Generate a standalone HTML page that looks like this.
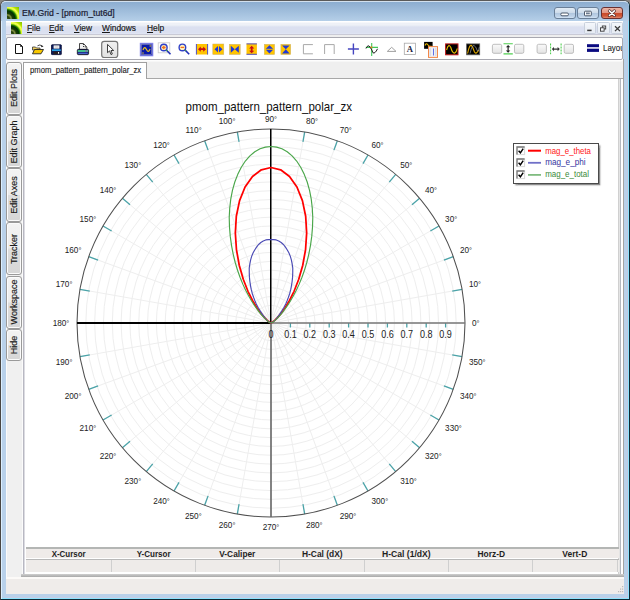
<!DOCTYPE html>
<html><head><meta charset="utf-8">
<style>
*{box-sizing:border-box;margin:0;padding:0}
html,body{width:630px;height:600px;overflow:hidden;background:#8a8682;font-family:"Liberation Sans",sans-serif}
.a{position:absolute}
#frame{left:0;top:0;width:630px;height:600px;background:#b9d1ea;border:1px solid #4a4642;border-top-color:#5a5a5a;border-right-color:#0c2a36;border-bottom-color:#0c2a36;border-radius:6px 6px 0 0;box-shadow:inset 1px 1px 0 #dcefff,inset -1px -1px 0 #8ee4ff}
#title{left:1px;top:1px;width:628px;height:20px;background:linear-gradient(#8cadd0,#b5cfe8);border-top:1px solid #d2e0ee;border-radius:5px 5px 0 0}
#ttext{left:21.5px;top:8.3px;-webkit-text-stroke:0.2px #1a1a30;font-size:9px;line-height:10px;color:#1a1a30;white-space:nowrap;transform:scaleX(0.966);transform-origin:0 0}
.cb{top:7.3px;height:11.6px;border:1px solid #6a7f98;border-radius:3px;background:linear-gradient(#e2ecf6 0%,#cddbea 48%,#b0c6de 52%,#c0d4ea 85%,#d4e4f4 100%)}
#cclose{border-color:#6a3030;background:linear-gradient(#ecb4a4 0%,#e29684 48%,#c84a2a 52%,#d05838 80%,#e08a70 100%)}
#menu{left:6px;top:21px;width:617px;height:14px;background:linear-gradient(#ffffff 0px,#ffffff 1px,#eef1f7 2px,#eef1f7 4px,#dbe0f0 6px,#dbe0f0 12px,#e2e7f5 13px);border-bottom:1px solid #c9cad6}
.mi{top:22.9px;-webkit-text-stroke:0.2px #1a1a1a;font-size:9.3px;line-height:10px;color:#1a1a1a;white-space:nowrap;transform:scaleX(0.9);transform-origin:0 0}
.mi u{text-decoration:underline}
.mdi{top:22.2px;width:12.4px;height:12.3px;border:1px solid #c8d0dc;background:linear-gradient(#f4f7fb,#e6ebf3);border-radius:1.5px}
#tbstrip{left:6px;top:35px;width:617px;height:3px;background:#eeeeee}
#toolbar{left:6px;top:37px;width:617px;height:23px;background:#fff;border:1px solid #a8a8b0;border-radius:2px;box-shadow:0 1.5px 0 #fdfdfd}
#client{left:6px;top:59px;width:618px;height:519px;background:#f0f0f0;border-right:1px solid #a4a4a4;border-left:1px solid #fcfbfa}
.vt{left:6px;width:15.6px;border:1px solid #9a9a9a;border-radius:3px;background:linear-gradient(#f3f3f3 0%,#ececec 49%,#dedede 51%,#d6d6d6 100%);box-shadow:inset 0 0 0 1px #fbfbfb}
.vt span{position:absolute;left:50%;top:50%;transform:translate(-50%,-50%) rotate(-90deg);font-size:9px;color:#1a1a1a;white-space:nowrap;-webkit-text-stroke:0.15px #1a1a1a}
#panel{left:23px;top:62px;width:600px;height:512.5px;background:#fff;border-left:1px solid #b8b8c2;box-shadow:inset 1px 0 0 #d4d4da,-1px 0 0 #fbfbfb}
#tabstrip{left:24px;top:62px;width:599px;height:17px;background:#efefef;border-bottom:1px solid #a8a8a8}
#tab{left:23px;top:62px;width:124px;height:17px;background:#fff;border:1px solid #a0a0a0;border-bottom:none;border-top-width:1px}
#tab span{position:absolute;left:5.5px;top:3.2px;-webkit-text-stroke:0.12px #1a1a1a;font-size:9px;line-height:9px;color:#1a1a1a;white-space:nowrap;transform:scaleX(0.855);transform-origin:0 0}
#plotarea{left:24px;top:79px;width:597px;height:495px;background:#fff;border-right:1px solid #b4b8c0;box-shadow:inset -1px 0 0 #e4e4e4,inset -2px 0 0 #d0d0d0,inset 1px 0 0 #dcdce2}
#tbl{left:26px;top:547px;width:593px;height:25px;border-top:2px solid #b4b4b4;background:#efebe8}
.th{top:549.9px;line-height:8px;width:84px;text-align:center;font-size:8.7px;font-weight:bold;color:#1e1e1e;transform:scaleX(0.895)}
#status{left:6px;top:577px;width:617px;height:16px;background:#f0edea}
</style></head><body>
<div id="frame" class="a"></div>
<div id="title" class="a"></div>

<div class="a" style="left:7px;top:7px;width:12px;height:12px;background:radial-gradient(circle at 0% 100%,#4a6020 0%,#203c08 14%,#8a9848 24%,#1c3c04 33%,#003200 48%,#2a8a00 56%,#d8f830 64%,#f4ff58 71%,#b8e400 80%,#78bc00 100%)"></div>
<div id="ttext" class="a">EM.Grid - [pmom_tut6d]</div>
<div class="a cb" style="left:553.5px;width:22px"></div>
<div class="a cb" style="left:577px;width:21.5px"></div>
<div id="cclose" class="a cb" style="left:601px;width:21.5px"></div>


<div id="menu" class="a"></div>
<div class="a" style="left:10.7px;top:22px;width:11.5px;height:11.5px;background:radial-gradient(circle at 0% 100%,#4a6020 0%,#203c08 14%,#8a9848 24%,#1c3c04 33%,#003200 48%,#2a8a00 56%,#d8f830 64%,#f4ff58 71%,#b8e400 80%,#78bc00 100%)"></div>
<div class="a mi" style="left:27px"><u>F</u>ile</div>
<div class="a mi" style="left:49px"><u>E</u>dit</div>
<div class="a mi" style="left:74px"><u>V</u>iew</div>
<div class="a mi" style="left:102px"><u>W</u>indows</div>
<div class="a mi" style="left:147px"><u>H</u>elp</div>
<div class="a mdi" style="left:583.7px"></div>
<div class="a mdi" style="left:597.2px"></div>
<div class="a mdi" style="left:611px"></div>
<svg class="a" style="left:0;top:0" width="630" height="40" viewBox="0 0 630 40">
<rect x="560.8" y="13" width="7.6" height="2.8" rx="1.2" fill="#fff" stroke="#3c4a5c" stroke-width="0.9"/>
<rect x="584.5" y="11.2" width="6.8" height="4.6" rx="0.8" fill="#fff" stroke="#3c4a5c" stroke-width="0.9"/>
<rect x="586" y="12.5" width="3.8" height="1.8" fill="#6a7a90"/>
<path d="M609.4 10.9 L614.4 15.5 M614.4 10.9 L609.4 15.5" stroke="#4a2a2a" stroke-width="3" stroke-linecap="round"/>
<path d="M609.4 10.9 L614.4 15.5 M614.4 10.9 L609.4 15.5" stroke="#fff" stroke-width="1.6" stroke-linecap="round"/>
<path d="M587.2 30.4 H591.6" stroke="#3a3a3a" stroke-width="1.5"/>
<rect x="602.3" y="26" width="3.4" height="3" fill="none" stroke="#3a3a3a" stroke-width="0.9"/>
<rect x="600.5" y="27.8" width="3.6" height="3.4" fill="#f4f6fa" stroke="#3a3a3a" stroke-width="0.9"/>
<path d="M615 26.3 L620 31.1 M620 26.3 L615 31.1" stroke="#3a3a3a" stroke-width="1.3"/>
</svg>

<div id="tbstrip" class="a"></div>
<div id="client" class="a"></div>
<div id="toolbar" class="a"></div>

<svg class="a" style="left:0;top:0" width="630" height="62" viewBox="0 0 630 62">
<!-- new doc -->
<path d="M15.5 44.5 H20.5 L22.5 46.5 V53.5 H15.5 Z" fill="#fff" stroke="#111" stroke-width="1"/>
<path d="M20.5 44.5 V46.5 H22.5" fill="none" stroke="#111" stroke-width="0.8"/>
<!-- open folder -->
<path d="M32.5 47 H35.5 L36.5 48 H40 V50 H32.5 Z" fill="#f0d060" stroke="#333" stroke-width="0.8"/>
<path d="M32.5 53.8 L34.5 49.5 H43.5 L41 53.8 Z" fill="#f8c800" stroke="#222" stroke-width="0.9"/>
<path d="M37.5 45.8 Q40 44 42 46" fill="none" stroke="#333" stroke-width="0.9"/>
<path d="M41.5 45 L43.5 46.5 L41.2 47.3 Z" fill="#111"/>
<!-- save floppy -->
<rect x="51.5" y="44.8" width="9.8" height="9.8" rx="0.5" fill="#0c1a5a" stroke="#050a30" stroke-width="0.8"/>
<rect x="53.6" y="45.4" width="5.8" height="3.2" fill="#f8f8f8"/>
<path d="M54.5 47 H58.5" stroke="#a0a0a0" stroke-width="0.6"/>
<rect x="52" y="49.3" width="8.8" height="1.7" fill="#2aa4e8"/>
<rect x="53.4" y="51.6" width="6.2" height="2.6" fill="#2a2020"/>
<rect x="58" y="52" width="1.1" height="1.7" fill="#fff"/>
<!-- printer -->
<path d="M79.5 43.5 H83.5 L86.8 47 V49.5 H79.5 Z" fill="#f0f0f0" stroke="#333" stroke-width="0.9"/>
<circle cx="83.5" cy="44.5" r="0.6" fill="#111"/><circle cx="83.6" cy="46.5" r="0.6" fill="#111"/><circle cx="85.3" cy="46.8" r="0.6" fill="#111"/>
<rect x="77.3" y="49.3" width="11.3" height="5.4" rx="1.2" fill="#0a1470" stroke="#111" stroke-width="0.7"/>
<rect x="77.8" y="50.1" width="10.3" height="1.8" fill="#48d090"/>
<rect x="85.5" y="50.1" width="1.6" height="1.8" fill="#8a6aa0"/>
<rect x="78.2" y="52.7" width="9.5" height="1.1" fill="#5a78e0"/>
<!-- pointer button -->
<rect x="101.7" y="41.3" width="16" height="16.2" rx="2.5" fill="url(#gbtn)" stroke="#767676" stroke-width="1.2"/>
<path d="M107.5 44.4 V52.7 L109.6 50.9 L111 54.6 L112.3 54 L111 50.5 H113.7 Z" fill="#fff" stroke="#2a2a2a" stroke-width="0.9" stroke-linejoin="round"/>
<defs>
<linearGradient id="gbtn" x1="0" y1="0" x2="0" y2="1"><stop offset="0" stop-color="#f0f0f0"/><stop offset="1" stop-color="#e2e2e2"/></linearGradient>
<linearGradient id="gsq" x1="0" y1="0" x2="0" y2="1"><stop offset="0" stop-color="#fafafa"/><stop offset="1" stop-color="#e4e4e4"/></linearGradient>
</defs>
<!-- blue wave box -->
<rect x="140.3" y="43.3" width="12.5" height="12.5" fill="#2030c0" stroke="#8080e8" stroke-width="1"/>
<rect x="141.5" y="44.5" width="10" height="10" fill="#0a1aa8" stroke="#9090b0" stroke-width="0.6"/>
<path d="M143 50 Q144.5 45.5 146.5 49.5 T150 49" fill="none" stroke="#e8c020" stroke-width="1.2"/>
<path d="M149.5 46 H151" stroke="#e8c020" stroke-width="1"/><path d="M142.2 53 H143.8" stroke="#e8c020" stroke-width="1"/>
<!-- zoom in -->
<rect x="158.2" y="42.8" width="11.6" height="10" fill="#fff" stroke="#c8c8c8" stroke-width="0.8"/>
<circle cx="163.8" cy="47.5" r="3.3" fill="#fff4c0" stroke="#3040c8" stroke-width="1.4"/>
<path d="M162 47.5 H165.6 M163.8 45.7 V49.3" stroke="#f07020" stroke-width="1.3"/>
<path d="M166.3 50 L170.5 54.3" stroke="#2030b8" stroke-width="1.6"/>
<path d="M166.3 50 L167.3 51" stroke="#40a040" stroke-width="1.2"/>
<!-- zoom out -->
<circle cx="182.4" cy="47.4" r="3.3" fill="#fff4c0" stroke="#3040c8" stroke-width="1.4"/>
<path d="M180.6 47.4 H184.2" stroke="#f07020" stroke-width="1.3"/>
<path d="M184.9 49.9 L189.2 54.2" stroke="#2030b8" stroke-width="1.6"/>
<path d="M184.9 49.9 L185.9 50.9" stroke="#40a040" stroke-width="1.2"/>
<!-- yellow boxes -->
<g fill="#ffc400">
<rect x="196" y="44" width="12" height="10.5"/>
<rect x="212.8" y="44" width="11" height="10.5"/>
<rect x="229.4" y="44.3" width="10.8" height="10.2"/>
<rect x="246.5" y="43.6" width="10.4" height="11"/>
<rect x="264.3" y="44.3" width="10.3" height="10.2"/>
<rect x="280.9" y="44.3" width="9.8" height="10.2"/>
</g>
<g stroke="#c8b070" stroke-width="0.5" fill="none">
<rect x="212.8" y="44" width="11" height="10.5"/><rect x="229.4" y="44.3" width="10.8" height="10.2"/><rect x="264.3" y="44.3" width="10.3" height="10.2"/><rect x="280.9" y="44.3" width="9.8" height="10.2"/>
</g>
<path d="M196.4 44 V54.5 M207.6 44 V54.5" stroke="#5050d0" stroke-width="1"/>
<path d="M198 49.2 L200.8 46.6 V48.3 H203.2 V46.6 L206 49.2 L203.2 51.8 V50.1 H200.8 V51.8 Z" fill="#c81010"/>
<path d="M218 46 V52.5 L214.5 49.2 Z M219 46 V52.5 L222.5 49.2 Z" fill="#2038d8"/>
<path d="M230.8 45.8 V52.8 L234.8 49.3 Z M238.8 45.8 V52.8 L234.8 49.3 Z" fill="#2038d8"/>
<path d="M246.5 43.9 H256.9 M246.5 54.3 H256.9" stroke="#5050d0" stroke-width="1"/>
<path d="M251.7 45.8 L254.3 48.5 H252.6 V50.7 H254.3 L251.7 53.2 L249.1 50.7 H250.8 V48.5 H249.1 Z" fill="#c81010"/>
<path d="M265.8 48.8 H273.1 L269.45 45.2 Z M265.8 49.8 H273.1 L269.45 53.4 Z" fill="#2038d8"/>
<path d="M282 45.4 H289.6 L285.8 49.3 Z M282 53.4 H289.6 L285.8 49.3 Z" fill="#2038d8"/>
<!-- [ and ∩ -->
<path d="M312.9 44.6 H303.4 V53.8 H312.9" fill="none" stroke="#a8a8a8" stroke-width="1"/>
<path d="M324.6 54 V44.6 H334.2 V54" fill="none" stroke="#a8a8a8" stroke-width="1"/>
<!-- + -->
<path d="M347.9 49 H358.9 M353.4 43.5 V54.5" stroke="#4545c0" stroke-width="1.4"/>
<!-- wave cursor -->
<path d="M371.7 42.9 V56.1 M365.8 47.4 H378" stroke="#40c858" stroke-width="1.1"/>
<path d="M366 48.5 Q368 44 370 47 T373 52.8 Q375 54 377.5 48.8" fill="none" stroke="#222" stroke-width="1"/>
<circle cx="371.4" cy="47.2" r="1" fill="#f08020"/>
<!-- triangle -->
<path d="M387.3 51.4 L391.7 47.3 L396 51.4 Z" fill="none" stroke="#a0a0a0" stroke-width="1"/>
<!-- A box -->
<rect x="404.3" y="43.2" width="11.2" height="11.2" fill="#fff" stroke="#a8a8a8" stroke-width="0.8"/>
<text x="409.9" y="52.4" text-anchor="middle" font-family="Liberation Serif" font-weight="bold" font-size="8.6" fill="#1a1a40">A</text>
<!-- complex icon -->
<rect x="424.1" y="41.9" width="8.5" height="6.9" fill="#000"/>
<path d="M425 45.5 Q426.3 42.5 427.8 44.8 T431.5 46" fill="none" stroke="#e8b800" stroke-width="1.1"/>
<rect x="428.5" y="46.6" width="9" height="10.8" fill="#f0f0f4" stroke="#f48848" stroke-width="1"/>
<path d="M430.2 48 V56 M435.8 48 V56" stroke="#d0d0d8" stroke-width="0.8"/>
<path d="M433.5 48.5 V55.5" stroke="#6070e8" stroke-width="1"/>
<!-- red box sine -->
<rect x="445.6" y="43.9" width="12.4" height="10.9" fill="#000" stroke="#c01818" stroke-width="1"/>
<path d="M446.6 50 Q448.5 42.8 450.8 47.5 Q452.6 53.8 454.8 53 Q456.6 52 457.2 48.5" fill="none" stroke="#e8c000" stroke-width="1.1"/>
<!-- gray box sine -->
<rect x="466.6" y="43.9" width="13.1" height="10.9" fill="#000" stroke="#606060" stroke-width="0.8"/>
<path d="M467.6 53.5 Q469.5 44 471.5 45.5 Q473 47 474.5 52 Q476 55 478.8 50" fill="none" stroke="#e0a800" stroke-width="1.1"/>
<path d="M470 53.5 Q472 45 474 45.5 Q476 46.5 477 50 Q478 53 479.4 47" fill="none" stroke="#808890" stroke-width="0.8"/>
<!-- squares -->
<g fill="url(#gsq)" stroke="#b8b8b8" stroke-width="0.9">
<rect x="492.4" y="44.3" width="9.3" height="9" rx="1.5"/>
<rect x="514.5" y="44.3" width="9.3" height="9" rx="1.5"/>
<rect x="537.1" y="44.3" width="9.3" height="9" rx="1.5"/>
<rect x="564.2" y="44.3" width="9.3" height="9" rx="1.5"/>
</g>
<!-- green ↕ -->
<path d="M503.5 43.8 H512.8 M503.5 53.9 H512.8" stroke="#50d050" stroke-width="1.1"/>
<path d="M508.1 45 L510.3 47.3 H508.7 V50.6 H510.3 L508.1 52.8 L505.9 50.6 H507.5 V47.3 H505.9 Z" fill="#222"/>
<!-- green ↔ -->
<path d="M550.6 43.5 V54.2 M561.1 43.5 V54.2" stroke="#40c840" stroke-width="1" stroke-dasharray="2 1"/>
<path d="M551.8 49.1 L554 46.9 V48.5 H557.6 V46.9 L559.8 49.1 L557.6 51.3 V49.7 H554 V51.3 Z" fill="#333"/>
<!-- layout -->
<rect x="587" y="44.2" width="12" height="3" fill="#0a0a80"/>
<rect x="587" y="48.7" width="12" height="3.2" fill="#0a0a80"/>
</svg>

<div class="a" style="left:602.5px;top:43px;width:19px;height:12px;overflow:hidden"><div style="font-size:9.2px;line-height:10px;color:#1a1a1a;white-space:nowrap;transform:scaleX(0.86);transform-origin:0 0;-webkit-text-stroke:0.1px #1a1a1a">Layout</div></div>
<div class="a vt" style="top:61.5px;height:53.3px"><span>Edit Plots</span></div>
<div class="a vt" style="top:114.8px;height:53.6px"><span>Edit Graph</span></div>
<div class="a vt" style="top:168.4px;height:53.4px"><span>Edit Axes</span></div>
<div class="a vt" style="top:221.8px;height:53.7px"><span>Tracker</span></div>
<div class="a vt" style="top:275.5px;height:53.5px"><span>Workspace</span></div>
<div class="a vt" style="top:329px;height:32.3px"><span>Hide</span></div>

<div id="panel" class="a"></div>
<div id="tabstrip" class="a"></div>
<div id="tab" class="a"><span>pmom_pattern_pattern_polar_zx</span></div>
<div id="plotarea" class="a"></div>
<svg class="a" style="left:0;top:0" width="630" height="600" viewBox="0 0 630 600">
<g fill="none" stroke="#eeeeee" stroke-width="1"><circle cx="271.0" cy="323.0" r="8.82"/><circle cx="271.0" cy="323.0" r="17.64"/><circle cx="271.0" cy="323.0" r="26.45"/><circle cx="271.0" cy="323.0" r="35.27"/><circle cx="271.0" cy="323.0" r="44.09"/><circle cx="271.0" cy="323.0" r="52.91"/><circle cx="271.0" cy="323.0" r="61.73"/><circle cx="271.0" cy="323.0" r="70.55"/><circle cx="271.0" cy="323.0" r="79.36"/><circle cx="271.0" cy="323.0" r="88.18"/><circle cx="271.0" cy="323.0" r="97.00"/><circle cx="271.0" cy="323.0" r="105.82"/><circle cx="271.0" cy="323.0" r="114.64"/><circle cx="271.0" cy="323.0" r="123.45"/><circle cx="271.0" cy="323.0" r="132.27"/><circle cx="271.0" cy="323.0" r="141.09"/><circle cx="271.0" cy="323.0" r="149.91"/><circle cx="271.0" cy="323.0" r="158.73"/><circle cx="271.0" cy="323.0" r="167.55"/><circle cx="271.0" cy="323.0" r="176.36"/><circle cx="271.0" cy="323.0" r="185.18"/><line x1="271.0" y1="323.0" x2="465.00" y2="323.00"/><line x1="271.0" y1="323.0" x2="462.05" y2="289.31"/><line x1="271.0" y1="323.0" x2="453.30" y2="256.65"/><line x1="271.0" y1="323.0" x2="439.01" y2="226.00"/><line x1="271.0" y1="323.0" x2="419.61" y2="198.30"/><line x1="271.0" y1="323.0" x2="395.70" y2="174.39"/><line x1="271.0" y1="323.0" x2="368.00" y2="154.99"/><line x1="271.0" y1="323.0" x2="337.35" y2="140.70"/><line x1="271.0" y1="323.0" x2="304.69" y2="131.95"/><line x1="271.0" y1="323.0" x2="271.00" y2="129.00"/><line x1="271.0" y1="323.0" x2="237.31" y2="131.95"/><line x1="271.0" y1="323.0" x2="204.65" y2="140.70"/><line x1="271.0" y1="323.0" x2="174.00" y2="154.99"/><line x1="271.0" y1="323.0" x2="146.30" y2="174.39"/><line x1="271.0" y1="323.0" x2="122.39" y2="198.30"/><line x1="271.0" y1="323.0" x2="102.99" y2="226.00"/><line x1="271.0" y1="323.0" x2="88.70" y2="256.65"/><line x1="271.0" y1="323.0" x2="79.95" y2="289.31"/><line x1="271.0" y1="323.0" x2="77.00" y2="323.00"/><line x1="271.0" y1="323.0" x2="79.95" y2="356.69"/><line x1="271.0" y1="323.0" x2="88.70" y2="389.35"/><line x1="271.0" y1="323.0" x2="102.99" y2="420.00"/><line x1="271.0" y1="323.0" x2="122.39" y2="447.70"/><line x1="271.0" y1="323.0" x2="146.30" y2="471.61"/><line x1="271.0" y1="323.0" x2="174.00" y2="491.01"/><line x1="271.0" y1="323.0" x2="204.65" y2="505.30"/><line x1="271.0" y1="323.0" x2="237.31" y2="514.05"/><line x1="271.0" y1="323.0" x2="271.00" y2="517.00"/><line x1="271.0" y1="323.0" x2="304.69" y2="514.05"/><line x1="271.0" y1="323.0" x2="337.35" y2="505.30"/><line x1="271.0" y1="323.0" x2="368.00" y2="491.01"/><line x1="271.0" y1="323.0" x2="395.70" y2="471.61"/><line x1="271.0" y1="323.0" x2="419.61" y2="447.70"/><line x1="271.0" y1="323.0" x2="439.01" y2="420.00"/><line x1="271.0" y1="323.0" x2="453.30" y2="389.35"/><line x1="271.0" y1="323.0" x2="462.05" y2="356.69"/></g>
<g stroke="#4aa3a8" stroke-width="1.3"><line x1="452.20" y1="291.05" x2="462.05" y2="289.31"/><line x1="443.90" y1="260.07" x2="453.30" y2="256.65"/><line x1="430.35" y1="231.00" x2="439.01" y2="226.00"/><line x1="411.95" y1="204.73" x2="419.61" y2="198.30"/><line x1="389.27" y1="182.05" x2="395.70" y2="174.39"/><line x1="363.00" y1="163.65" x2="368.00" y2="154.99"/><line x1="333.93" y1="150.10" x2="337.35" y2="140.70"/><line x1="302.95" y1="141.80" x2="304.69" y2="131.95"/><line x1="239.05" y1="141.80" x2="237.31" y2="131.95"/><line x1="208.07" y1="150.10" x2="204.65" y2="140.70"/><line x1="179.00" y1="163.65" x2="174.00" y2="154.99"/><line x1="152.73" y1="182.05" x2="146.30" y2="174.39"/><line x1="130.05" y1="204.73" x2="122.39" y2="198.30"/><line x1="111.65" y1="231.00" x2="102.99" y2="226.00"/><line x1="98.10" y1="260.07" x2="88.70" y2="256.65"/><line x1="89.80" y1="291.05" x2="79.95" y2="289.31"/><line x1="89.80" y1="354.95" x2="79.95" y2="356.69"/><line x1="98.10" y1="385.93" x2="88.70" y2="389.35"/><line x1="111.65" y1="415.00" x2="102.99" y2="420.00"/><line x1="130.05" y1="441.27" x2="122.39" y2="447.70"/><line x1="152.73" y1="463.95" x2="146.30" y2="471.61"/><line x1="179.00" y1="482.35" x2="174.00" y2="491.01"/><line x1="208.07" y1="495.90" x2="204.65" y2="505.30"/><line x1="239.05" y1="504.20" x2="237.31" y2="514.05"/><line x1="302.95" y1="504.20" x2="304.69" y2="514.05"/><line x1="333.93" y1="495.90" x2="337.35" y2="505.30"/><line x1="363.00" y1="482.35" x2="368.00" y2="491.01"/><line x1="389.27" y1="463.95" x2="395.70" y2="471.61"/><line x1="411.95" y1="441.27" x2="419.61" y2="447.70"/><line x1="430.35" y1="415.00" x2="439.01" y2="420.00"/><line x1="443.90" y1="385.93" x2="453.30" y2="389.35"/><line x1="452.20" y1="354.95" x2="462.05" y2="356.69"/><line x1="290.40" y1="323.0" x2="290.40" y2="327.5"/><line x1="309.80" y1="323.0" x2="309.80" y2="327.5"/><line x1="329.20" y1="323.0" x2="329.20" y2="327.5"/><line x1="348.60" y1="323.0" x2="348.60" y2="327.5"/><line x1="368.00" y1="323.0" x2="368.00" y2="327.5"/><line x1="387.40" y1="323.0" x2="387.40" y2="327.5"/><line x1="406.80" y1="323.0" x2="406.80" y2="327.5"/><line x1="426.20" y1="323.0" x2="426.20" y2="327.5"/><line x1="445.60" y1="323.0" x2="445.60" y2="327.5"/></g>
<circle cx="271.0" cy="323.0" r="194.0" fill="none" stroke="#505050" stroke-width="1.05"/>
<line x1="271.0" y1="323.0" x2="465.0" y2="323.0" stroke="#777" stroke-width="1.6"/>
<line x1="271.0" y1="323.0" x2="271.0" y2="517.0" stroke="#666" stroke-width="1.6"/>
<line x1="77.0" y1="322.9" x2="271.0" y2="322.9" stroke="#000" stroke-width="2"/>
<line x1="270.75" y1="129.0" x2="270.75" y2="323.0" stroke="#000" stroke-width="1.5"/>
<polyline points="271.00,323.00 271.00,323.00 271.00,323.00 271.00,323.00 271.02,323.00 271.07,322.98 271.22,322.91 271.55,322.74 272.18,322.35 273.27,321.56 274.98,320.11 277.42,317.69 280.65,313.94 284.64,308.48 289.21,300.99 294.05,291.28 298.74,279.29 302.75,265.24 305.56,249.56 306.66,232.94 305.68,216.28 302.42,200.61 296.94,187.01 289.51,176.47 280.64,169.80 271.00,167.51 261.36,169.80 252.49,176.47 245.06,187.01 239.58,200.61 236.32,216.28 235.34,232.94 236.44,249.56 239.25,265.24 243.26,279.29 247.95,291.28 252.79,300.99 257.36,308.48 261.35,313.94 264.58,317.69 267.02,320.11 268.73,321.56 269.82,322.35 270.45,322.74 270.78,322.91 270.93,322.98 270.98,323.00 271.00,323.00 271.00,323.00 271.00,323.00 271.00,323.00" fill="none" stroke="#ff0000" stroke-width="1.75" stroke-linejoin="round"/>
<polyline points="271.15,323.00 271.18,322.99 271.21,322.99 271.25,322.98 271.30,322.96 271.35,322.94 271.42,322.92 271.50,322.89 271.59,322.85 271.69,322.80 271.82,322.73 271.96,322.65 272.13,322.55 272.33,322.42 272.57,322.26 272.84,322.06 273.16,321.82 273.52,321.51 273.95,321.13 274.44,320.66 275.01,320.09 275.67,319.38 276.43,318.51 277.29,317.45 278.29,316.16 279.43,314.57 280.72,312.65 282.19,310.31 283.85,307.47 285.72,304.02 287.00,300.98 288.34,297.49 289.73,293.48 290.72,289.66 291.44,285.82 292.10,281.58 292.58,277.14 292.74,272.75 292.77,268.01 292.18,264.18 291.42,260.14 290.35,256.39 288.97,253.01 287.31,250.01 285.47,247.17 283.43,244.50 281.16,242.55 278.75,241.01 276.23,239.92 273.62,239.67 271.00,239.58 268.38,239.67 265.77,239.92 263.25,241.01 260.84,242.55 258.57,244.50 256.53,247.17 254.69,250.01 253.03,253.01 251.65,256.39 250.58,260.14 249.82,264.18 249.23,268.01 249.26,272.75 249.42,277.14 249.90,281.58 250.56,285.82 251.28,289.66 252.27,293.48 253.66,297.49 255.00,300.98 256.28,304.02 258.15,307.47 259.81,310.31 261.28,312.65 262.57,314.57 263.71,316.16 264.71,317.45 265.57,318.51 266.33,319.38 266.99,320.09 267.56,320.66 268.05,321.13 268.48,321.51 268.84,321.82 269.16,322.06 269.43,322.26 269.67,322.42 269.87,322.55 270.04,322.65 270.18,322.73 270.31,322.80 270.41,322.85 270.50,322.89 270.58,322.92 270.65,322.94 270.70,322.96 270.75,322.98 270.79,322.99 270.82,322.99 270.85,323.00" fill="none" stroke="#4a4ab4" stroke-width="1.15" stroke-linejoin="round"/>
<polyline points="271.15,323.00 271.18,322.99 271.21,322.99 271.25,322.98 271.30,322.96 271.35,322.94 271.42,322.92 271.50,322.89 271.59,322.85 271.69,322.80 271.82,322.73 271.97,322.65 272.15,322.54 272.38,322.40 272.66,322.22 273.01,321.97 273.46,321.65 274.02,321.21 274.72,320.64 275.59,319.88 276.65,318.90 277.91,317.64 279.40,316.05 281.13,314.07 283.09,311.64 285.30,308.70 287.75,305.17 290.41,300.98 293.28,296.06 296.33,290.34 299.06,284.38 301.79,277.69 304.47,270.26 306.78,262.49 308.76,254.31 310.46,245.56 311.74,236.42 312.50,227.10 312.78,217.48 312.29,208.32 311.24,199.14 309.55,190.32 307.20,182.01 304.23,174.34 300.70,167.30 296.66,161.01 292.12,155.84 287.19,151.71 281.96,148.72 276.53,147.10 271.00,146.55 265.47,147.10 260.04,148.72 254.81,151.71 249.88,155.84 245.34,161.01 241.30,167.30 237.77,174.34 234.80,182.01 232.45,190.32 230.76,199.14 229.71,208.32 229.22,217.48 229.50,227.10 230.26,236.42 231.54,245.56 233.24,254.31 235.22,262.49 237.53,270.26 240.21,277.69 242.94,284.38 245.67,290.34 248.72,296.06 251.59,300.98 254.25,305.17 256.70,308.70 258.91,311.64 260.87,314.07 262.60,316.05 264.09,317.64 265.35,318.90 266.41,319.88 267.28,320.64 267.98,321.21 268.54,321.65 268.99,321.97 269.34,322.22 269.62,322.40 269.85,322.54 270.03,322.65 270.18,322.73 270.31,322.80 270.41,322.85 270.50,322.89 270.58,322.92 270.65,322.94 270.70,322.96 270.75,322.98 270.79,322.99 270.82,322.99 270.85,323.00" fill="none" stroke="#4aa64a" stroke-width="1.15" stroke-linejoin="round"/>
<g font-family="Liberation Sans" font-size="8.2" fill="#222"><text x="472.0" y="326.0" text-anchor="start">0<tspan font-size="7.4">°</tspan></text><text x="468.9" y="287.1" text-anchor="start">10<tspan font-size="7.4">°</tspan></text><text x="459.9" y="253.3" text-anchor="start">20<tspan font-size="7.4">°</tspan></text><text x="445.1" y="221.5" text-anchor="start">30<tspan font-size="7.4">°</tspan></text><text x="425.0" y="192.8" text-anchor="start">40<tspan font-size="7.4">°</tspan></text><text x="400.2" y="168.0" text-anchor="start">50<tspan font-size="7.4">°</tspan></text><text x="371.5" y="147.9" text-anchor="start">60<tspan font-size="7.4">°</tspan></text><text x="339.7" y="133.1" text-anchor="start">70<tspan font-size="7.4">°</tspan></text><text x="305.9" y="124.1" text-anchor="start">80<tspan font-size="7.4">°</tspan></text><text x="271.0" y="122.0" text-anchor="middle">90<tspan font-size="7.4">°</tspan></text><text x="235.4" y="124.1" text-anchor="end">100<tspan font-size="7.4">°</tspan></text><text x="201.6" y="133.1" text-anchor="end">110<tspan font-size="7.4">°</tspan></text><text x="169.8" y="147.9" text-anchor="end">120<tspan font-size="7.4">°</tspan></text><text x="141.1" y="168.0" text-anchor="end">130<tspan font-size="7.4">°</tspan></text><text x="116.3" y="192.8" text-anchor="end">140<tspan font-size="7.4">°</tspan></text><text x="96.2" y="221.5" text-anchor="end">150<tspan font-size="7.4">°</tspan></text><text x="81.4" y="253.3" text-anchor="end">160<tspan font-size="7.4">°</tspan></text><text x="72.4" y="287.1" text-anchor="end">170<tspan font-size="7.4">°</tspan></text><text x="69.3" y="326.0" text-anchor="end">180<tspan font-size="7.4">°</tspan></text><text x="72.4" y="364.9" text-anchor="end">190<tspan font-size="7.4">°</tspan></text><text x="81.4" y="398.7" text-anchor="end">200<tspan font-size="7.4">°</tspan></text><text x="96.2" y="430.5" text-anchor="end">210<tspan font-size="7.4">°</tspan></text><text x="116.3" y="459.2" text-anchor="end">220<tspan font-size="7.4">°</tspan></text><text x="141.1" y="484.0" text-anchor="end">230<tspan font-size="7.4">°</tspan></text><text x="169.8" y="504.1" text-anchor="end">240<tspan font-size="7.4">°</tspan></text><text x="201.6" y="518.9" text-anchor="end">250<tspan font-size="7.4">°</tspan></text><text x="235.4" y="527.9" text-anchor="end">260<tspan font-size="7.4">°</tspan></text><text x="271.0" y="530.0" text-anchor="middle">270<tspan font-size="7.4">°</tspan></text><text x="305.9" y="527.9" text-anchor="start">280<tspan font-size="7.4">°</tspan></text><text x="339.7" y="518.9" text-anchor="start">290<tspan font-size="7.4">°</tspan></text><text x="371.5" y="504.1" text-anchor="start">300<tspan font-size="7.4">°</tspan></text><text x="400.2" y="484.0" text-anchor="start">310<tspan font-size="7.4">°</tspan></text><text x="425.0" y="459.2" text-anchor="start">320<tspan font-size="7.4">°</tspan></text><text x="445.1" y="430.5" text-anchor="start">330<tspan font-size="7.4">°</tspan></text><text x="459.9" y="398.7" text-anchor="start">340<tspan font-size="7.4">°</tspan></text><text x="468.9" y="364.9" text-anchor="start">350<tspan font-size="7.4">°</tspan></text></g>
<g font-family="Liberation Sans" font-size="10.4" fill="#222"><text x="271.0" y="337.9" text-anchor="middle" textLength="5.01" lengthAdjust="spacingAndGlyphs">0</text><text x="290.4" y="337.9" text-anchor="middle" textLength="12.53" lengthAdjust="spacingAndGlyphs">0.1</text><text x="309.8" y="337.9" text-anchor="middle" textLength="12.53" lengthAdjust="spacingAndGlyphs">0.2</text><text x="329.2" y="337.9" text-anchor="middle" textLength="12.53" lengthAdjust="spacingAndGlyphs">0.3</text><text x="348.6" y="337.9" text-anchor="middle" textLength="12.53" lengthAdjust="spacingAndGlyphs">0.4</text><text x="368.0" y="337.9" text-anchor="middle" textLength="12.53" lengthAdjust="spacingAndGlyphs">0.5</text><text x="387.4" y="337.9" text-anchor="middle" textLength="12.53" lengthAdjust="spacingAndGlyphs">0.6</text><text x="406.8" y="337.9" text-anchor="middle" textLength="12.53" lengthAdjust="spacingAndGlyphs">0.7</text><text x="426.2" y="337.9" text-anchor="middle" textLength="12.53" lengthAdjust="spacingAndGlyphs">0.8</text><text x="445.6" y="337.9" text-anchor="middle" textLength="12.53" lengthAdjust="spacingAndGlyphs">0.9</text></g>
<text x="185.6" y="111.2" font-family="Liberation Sans" font-size="13.6" fill="#111" textLength="166.3" lengthAdjust="spacingAndGlyphs">pmom_pattern_pattern_polar_zx</text>
</svg>
<div class="a" style="left:26px;top:546.6px;width:593px;height:2.1px;background:#b4b6b4"></div>
<div class="a" style="left:26px;top:549.4px;width:593px;height:8.8px;background:#efebe9"></div>
<div class="a" style="left:26px;top:558.7px;width:593px;height:1.3px;background:#b8b8b8"></div>
<div class="a" style="left:26px;top:560px;width:593px;height:12px;background:#eeebe9"></div>
<div class="a" style="left:110.5px;top:560px;width:1px;height:12px;background:#cfcfcf"></div>
<div class="a" style="left:194.9px;top:560px;width:1px;height:12px;background:#cfcfcf"></div>
<div class="a" style="left:279.3px;top:560px;width:1px;height:12px;background:#cfcfcf"></div>
<div class="a" style="left:363.6px;top:560px;width:1px;height:12px;background:#cfcfcf"></div>
<div class="a" style="left:448px;top:560px;width:1px;height:12px;background:#cfcfcf"></div>
<div class="a" style="left:532.4px;top:560px;width:1px;height:12px;background:#cfcfcf"></div>
<div class="a" style="left:616.7px;top:560px;width:1px;height:12px;background:#cfcfcf"></div>
<svg class="a" style="left:0;top:540px" width="630" height="30" viewBox="0 540 630 30"><g font-family="Liberation Sans" font-weight="bold" font-size="8.7" fill="#1e1e1e"><text x="51.70" y="557" textLength="33.9" lengthAdjust="spacingAndGlyphs">X-Cursor</text><text x="136.65" y="557" textLength="33.9" lengthAdjust="spacingAndGlyphs">Y-Cursor</text><text x="219.25" y="557" textLength="36.1" lengthAdjust="spacingAndGlyphs">V-Caliper</text><text x="302.00" y="557" textLength="40.6" lengthAdjust="spacingAndGlyphs">H-Cal (dX)</text><text x="382.00" y="557" textLength="48.6" lengthAdjust="spacingAndGlyphs">H-Cal (1/dX)</text><text x="477.50" y="557" textLength="27.6" lengthAdjust="spacingAndGlyphs">Horz-D</text><text x="562.35" y="557" textLength="24.9" lengthAdjust="spacingAndGlyphs">Vert-D</text></g></svg>
<div class="a" style="left:21px;top:574px;width:603px;height:3px;background:linear-gradient(#cfcfcf,#a8a8a8)"></div>
<div class="a" style="left:6px;top:577px;width:618px;height:2px;background:#fcfaf8"></div>
<div class="a" style="left:6px;top:579px;width:618px;height:15px;background:#efecea"></div>
<div class="a" style="left:6px;top:597px;width:622px;height:1px;background:#c8cce4"></div>
<div class="a" style="left:627.3px;top:20px;width:0.8px;height:577px;background:#c4c8e0"></div>
<svg class="a" style="left:612px;top:584px" width="12" height="10" viewBox="0 0 12 10">
<g fill="#b8b8b8"><rect x="10" y="2" width="1.2" height="1.2"/><rect x="8" y="4.5" width="1.2" height="1.2"/><rect x="10" y="4.5" width="1.2" height="1.2"/><rect x="6" y="7" width="1.2" height="1.2"/><rect x="8" y="7" width="1.2" height="1.2"/><rect x="10" y="7" width="1.2" height="1.2"/></g>
</svg>
<div class="a" style="left:513.4px;top:142.8px;width:85.2px;height:40.8px;background:#fff;border:1.2px solid #4a4a4a;box-shadow:1.5px 1.5px 1.5px rgba(0,0,0,0.45)"></div>
<svg class="a" style="left:0;top:0" width="630" height="600" viewBox="0 0 630 600">
<g>
<rect x="517" y="147" width="7.6" height="7.6" fill="#fff" stroke="#d8d8d8" stroke-width="1"/><path d="M517 154.6 V147 H524.6" fill="none" stroke="#777" stroke-width="1.3"/>
<rect x="517" y="159" width="7.6" height="7.6" fill="#fff" stroke="#d8d8d8" stroke-width="1"/><path d="M517 166.6 V159 H524.6" fill="none" stroke="#777" stroke-width="1.3"/>
<rect x="517" y="171" width="7.6" height="7.6" fill="#fff" stroke="#d8d8d8" stroke-width="1"/><path d="M517 178.6 V171 H524.6" fill="none" stroke="#777" stroke-width="1.3"/>
<path d="M518.6 150.8 L520.4 152.8 L523.2 148.6 M518.6 162.8 L520.4 164.8 L523.2 160.6 M518.6 174.8 L520.4 176.8 L523.2 172.6" fill="none" stroke="#000" stroke-width="1.5"/>
</g>
<path d="M528 150.7 H541" stroke="#ff0000" stroke-width="2"/>
<path d="M528 162.8 H541" stroke="#7070c8" stroke-width="1.8"/>
<path d="M528 174.9 H541" stroke="#80bc80" stroke-width="1.8"/>
<g font-family="Liberation Sans" font-size="8.6">
<text x="545.2" y="153.6" fill="#ff2020" textLength="45.8" lengthAdjust="spacingAndGlyphs">mag_e_theta</text>
<text x="545.2" y="165.3" fill="#3535a0" textLength="40.4" lengthAdjust="spacingAndGlyphs">mag_e_phi</text>
<text x="545.2" y="177.4" fill="#3a8a3a" textLength="43.8" lengthAdjust="spacingAndGlyphs">mag_e_total</text>
</g>
</svg>
</body></html>
